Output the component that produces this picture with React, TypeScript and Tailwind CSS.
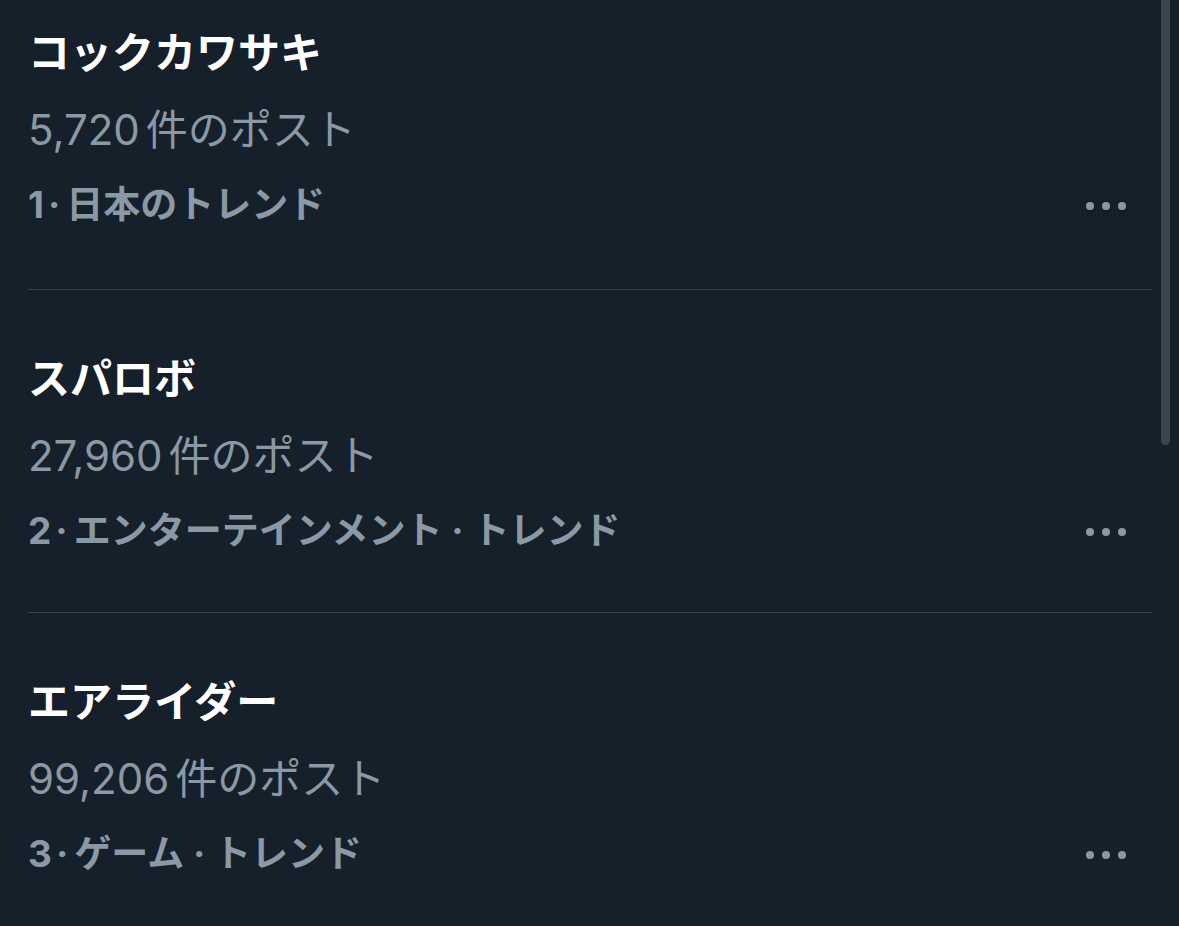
type Trend = { rank: number; title: string; posts: string; context: string };

const trends: Trend[] = [
  { rank: 1, title: "コックカワサキ", posts: "5,720", context: "日本のトレンド" },
  { rank: 2, title: "スパロボ", posts: "27,960", context: "エンターテインメント · トレンド" },
  { rank: 3, title: "エアライダー", posts: "99,206", context: "ゲーム · トレンド" },
];

const font = "font-['Inter','Noto_Sans_CJK_JP',sans-serif]";

function TrendRow({ t, first }: { t: Trend; first: boolean }) {
  return (
    <div className={`${first ? "pt-[14px] pb-[44px]" : "border-t border-[#38444d] pt-[50px] pb-[41px]"}`}>
      <div className="flex h-[77px] items-center text-[42px] font-bold text-white">
        {t.title}
      </div>
      <div className="flex h-[77px] items-center text-[42px] text-[#8b98a5]">
        {t.posts}
        <span className="ml-[6px]">件のポスト</span>
      </div>
      <div className="flex h-[77px] items-center justify-between pb-[4px]">
        <div className="text-[37px] font-bold text-[#8b98a5]">
          {t.rank}
          <span className="ml-[4px] mr-[6px]">·</span>
          {t.context}
        </div>
        <div className="mr-[26px] flex items-center gap-[8px] pt-[2px]">
          <span className="h-[8px] w-[8px] rounded-full bg-[#8b98a5]" />
          <span className="h-[8px] w-[8px] rounded-full bg-[#8b98a5]" />
          <span className="h-[8px] w-[8px] rounded-full bg-[#8b98a5]" />
        </div>
      </div>
    </div>
  );
}

export default function App() {
  return (
    <div className={`relative h-[926px] w-[1179px] overflow-hidden bg-[#16202a] ${font}`}>
      <div className="ml-[28px] mr-[27px]">
        {trends.map((t, i) => (
          <TrendRow key={t.rank} t={t} first={i === 0} />
        ))}
      </div>
      <div className="absolute right-[9px] top-[-10px] h-[455px] w-[9px] rounded-full bg-[#3b4550]" />
    </div>
  );
}
